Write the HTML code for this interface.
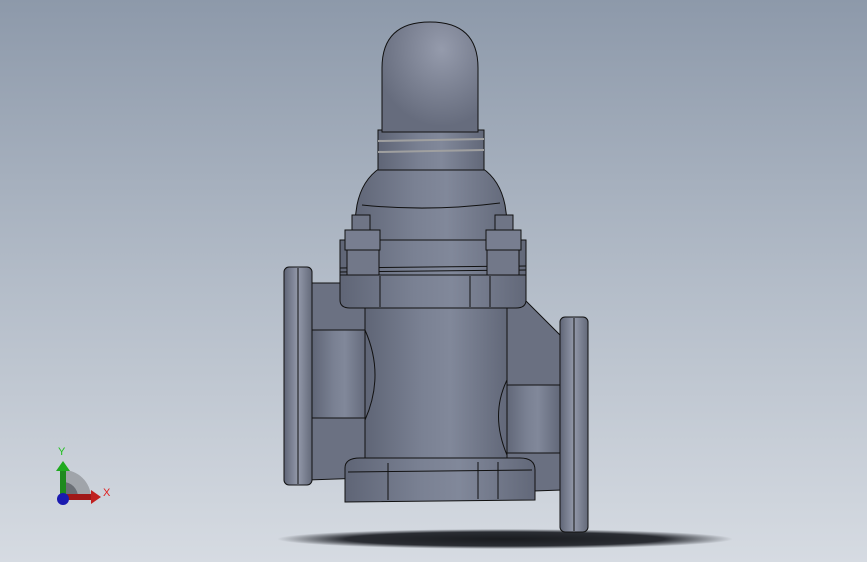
<!DOCTYPE html>
<html><head><style>
html,body{margin:0;padding:0}
body{width:867px;height:562px;overflow:hidden;background:linear-gradient(to bottom,#8d99aa 0%,#b3bcc8 50%,#d6dbe2 100%);}
svg{position:absolute;left:0;top:0}
text{font-family:"Liberation Sans",sans-serif}
</style></head><body>
<svg width="867" height="562" viewBox="0 0 867 562">
<defs>
<linearGradient id="cyl" x1="0" x2="1" y1="0" y2="0">
<stop offset="0" stop-color="#5f6576"/><stop offset="0.4" stop-color="#7a8193"/><stop offset="0.6" stop-color="#81889a"/><stop offset="1" stop-color="#626879"/></linearGradient>
<linearGradient id="fl" x1="0" x2="1"><stop offset="0" stop-color="#5f6576"/><stop offset="0.5" stop-color="#9399aa"/><stop offset="1" stop-color="#636979"/></linearGradient>
<radialGradient id="dome" cx="0.62" cy="0.25" r="0.7"><stop offset="0" stop-color="#959bac"/><stop offset="1" stop-color="#666c7d"/></radialGradient>
<radialGradient id="sh" cx="0.5" cy="0.5" r="0.5"><stop offset="0" stop-color="#1a1c20"/><stop offset="0.7" stop-color="#2a2d33"/><stop offset="1" stop-color="#2a2d33" stop-opacity="0"/></radialGradient>
</defs>
<ellipse cx="505" cy="539" rx="228" ry="10" fill="url(#sh)"/>
<g stroke="#111" stroke-width="1">
<path d="M500 300 L525 300 L560 335 L562 490 L505 492 Z" fill="#6a7081"/>
<rect x="505" y="385" width="55" height="68" fill="url(#cyl)"/>
<path d="M308 283 L365 283 L365 478 L308 480 Z" fill="#6b7182"/>
<rect x="312" y="330" width="55" height="88" fill="url(#cyl)"/>
<rect x="284" y="267" width="28" height="218" rx="5" fill="url(#fl)"/>
<line x1="298" y1="268" x2="298" y2="484"/>
<rect x="560" y="317" width="28" height="215" rx="5" fill="url(#fl)"/>
<line x1="574" y1="318" x2="574" y2="531"/>
<rect x="365" y="305" width="142" height="160" fill="url(#cyl)"/>
<path d="M365 330 Q385 375 365 420" fill="none"/>
<path d="M507 380 Q490 415 507 455" fill="none"/>
<path d="M345 468 Q345 458 360 458 L520 458 Q535 458 535 470 L535 500 L345 502 Z" fill="url(#cyl)"/>
<line x1="388" y1="463" x2="388" y2="500"/><line x1="478" y1="462" x2="478" y2="499"/><line x1="498" y1="462" x2="498" y2="499"/>
<line x1="348" y1="472" x2="532" y2="470"/>
<path d="M340 275 L526 275 L526 300 Q526 308 516 308 L350 308 Q340 308 340 300 Z" fill="url(#cyl)"/>
<line x1="380" y1="276" x2="380" y2="307"/><line x1="470" y1="276" x2="470" y2="307"/><line x1="490" y1="276" x2="490" y2="307"/>
<path d="M340 240 L526 240 L526 275 L340 275 Z" fill="url(#cyl)"/>
<line x1="340" y1="268" x2="526" y2="266"/><line x1="340" y1="272" x2="526" y2="270"/>
<path d="M380 168 L482 168 Q500 180 505 205 L510 240 L352 240 L357 205 Q362 180 380 168 Z" fill="url(#cyl)"/>
<path d="M362 205 Q430 212 500 203" fill="none"/>
<rect x="352" y="215" width="18" height="28" fill="#6f7586"/>
<rect x="345" y="230" width="35" height="20" fill="#787e90"/>
<rect x="495" y="215" width="18" height="28" fill="#6f7586"/>
<rect x="486" y="230" width="35" height="20" fill="#787e90"/>
<rect x="347" y="250" width="32" height="25" fill="#727889"/>
<rect x="487" y="250" width="32" height="25" fill="#727889"/>
<rect x="378" y="130" width="106" height="40" fill="url(#cyl)"/>
<line x1="378" y1="141" x2="484" y2="139" stroke="#a0a0a0" stroke-width="2"/>
<line x1="378" y1="152" x2="484" y2="150" stroke="#a0a0a0" stroke-width="2"/>
<path d="M382 132 L382 68 Q382 22 430 22 Q478 22 478 68 L478 132 Z" fill="url(#dome)"/>
</g>
<path d="M63 497 L63 470 A28 28 0 0 1 91 497 Z" fill="#a0a4aa"/>
<path d="M63 497 L63 482 A15 15 0 0 1 78 497 Z" fill="#6b6f76"/>
<rect x="60" y="470" width="6" height="27" fill="#1e8a1e"/><path d="M56 471 L63 461 L70 471 Z" fill="#1faa1f"/>
<rect x="63" y="494" width="29" height="6" fill="#a01818"/><path d="M91 490 L101 497 L91 504 Z" fill="#c02020"/>
<circle cx="63" cy="499" r="6" fill="#1a1ab0"/>
<text x="58" y="455" font-size="11" fill="#20c020">Y</text>
<text x="103" y="496" font-size="11" fill="#e02020">X</text>
</svg>
</body></html>
